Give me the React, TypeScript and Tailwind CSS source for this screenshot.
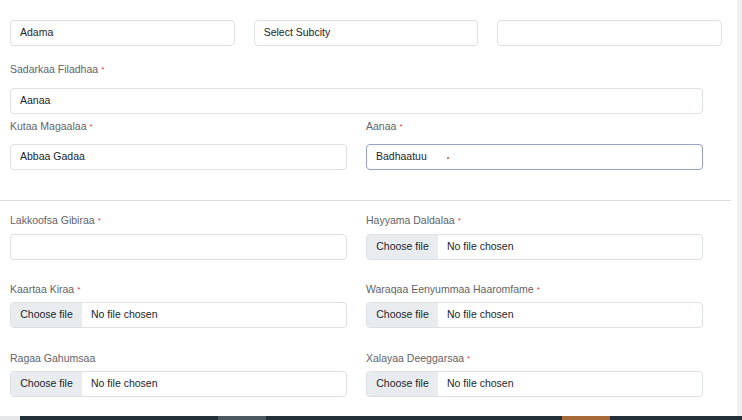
import React from "react";

const font = { fontFamily: '"Liberation Sans", Arial, sans-serif' };

function Label({ text, req = true }: { text: string; req?: boolean }) {
  return (
    <div className="h-[15px] text-[10.5px] leading-[15px] text-[#5f6368] whitespace-nowrap">
      {text}
      {req && <span className="ml-[3px] text-[8px] align-top text-[#dc3545]">*</span>}
    </div>
  );
}

function TextInput({ value, focused = false }: { value?: string; focused?: boolean }) {
  return (
    <div
      className={
        "h-[26px] rounded-[4px] border bg-white flex items-center pl-[9px] text-[10.5px] text-[#212529] " +
        (focused ? "border-[#98a0cc]" : "border-[#dcdfe3]")
      }
    >
      {value}
      {focused && <span className="ml-[20px] mt-[2px] w-[2px] h-[2px] rounded-full bg-[#e0453c]" />}
    </div>
  );
}

function FileInput() {
  return (
    <div className="h-[26px] rounded-[4px] border border-[#dcdfe3] bg-white flex items-stretch overflow-hidden text-[10.5px] text-[#212529]">
      <div className="w-[71px] bg-[#e9ecef] flex items-center justify-center">Choose file</div>
      <div className="flex items-center pl-[9px]">No file chosen</div>
    </div>
  );
}

export default function App() {
  return (
    <div className="w-[742px] h-[420px] overflow-hidden bg-white flex flex-col" style={font}>
      <div className="flex h-[416px]">
        <div className="w-[737px] flex flex-col">
          <div className="pl-[10px] pt-[20px]">
            <div className="grid grid-cols-3 gap-x-[19px] w-[712px]">
              <TextInput value="Adama" />
              <TextInput value="Select Subcity" />
              <TextInput />
            </div>
          </div>
          <div className="pl-[10px] w-[703px] mt-[16px]">
            <Label text="Sadarkaa Filadhaa" />
            <div className="mt-[11px]">
              <TextInput value="Aanaa" />
            </div>
            <div className="grid grid-cols-2 gap-x-[19px] mt-[5px]">
              <div>
                <Label text="Kutaa Magaalaa" />
                <div className="mt-[10px]">
                  <TextInput value="Abbaa Gadaa" />
                </div>
              </div>
              <div>
                <Label text="Aanaa" />
                <div className="mt-[10px]">
                  <TextInput value="Badhaatuu" focused />
                </div>
              </div>
            </div>
          </div>
          <div className="mt-[30px] w-[731px] h-px bg-[#d9dcdf]" />
          <div className="pl-[10px] w-[703px] mt-[12px] grid grid-cols-2 gap-x-[19px]">
            <div>
              <Label text="Lakkoofsa Gibiraa" />
              <div className="mt-[6px]">
                <TextInput />
              </div>
            </div>
            <div>
              <Label text="Hayyama Daldalaa" />
              <div className="mt-[6px]">
                <FileInput />
              </div>
            </div>
            <div className="mt-[22px]">
              <Label text="Kaartaa Kiraa" />
              <div className="mt-[5px]">
                <FileInput />
              </div>
            </div>
            <div className="mt-[22px]">
              <Label text="Waraqaa Eenyummaa Haaromfame" />
              <div className="mt-[5px]">
                <FileInput />
              </div>
            </div>
            <div className="mt-[23px]">
              <Label text="Ragaa Gahumsaa" req={false} />
              <div className="mt-[5px]">
                <FileInput />
              </div>
            </div>
            <div className="mt-[23px]">
              <Label text="Xalayaa Deeggarsaa" />
              <div className="mt-[5px]">
                <FileInput />
              </div>
            </div>
          </div>
        </div>
        <div className="w-[5px] bg-[#f0f0f1]" />
      </div>
      <div className="flex h-[4px]">
        <div className="w-[20px] bg-[#e6e7e8]" />
        <div className="w-[198px] bg-[#223137]" />
        <div className="w-[48px] bg-[#4b5a60]" />
        <div className="w-[296px] bg-[#223137]" />
        <div className="w-[48px] bg-[#a86a38]" />
        <div className="flex-1 bg-[#223137]" />
      </div>
    </div>
  );
}
